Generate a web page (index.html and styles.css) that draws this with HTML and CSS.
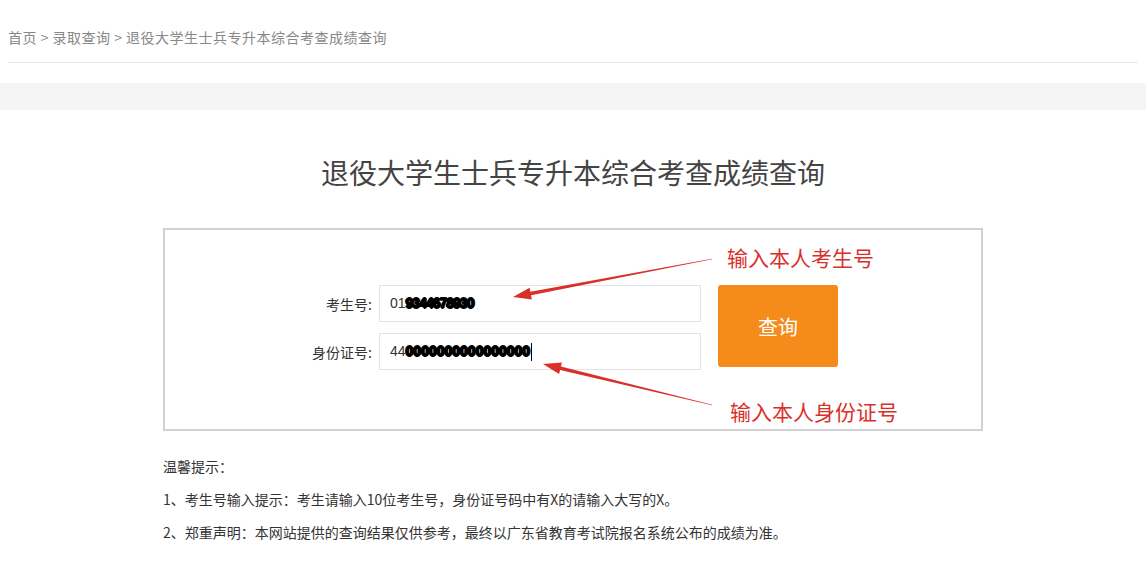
FILE: index.html
```html
<!DOCTYPE html>
<html lang="zh-CN">
<head>
    <meta charset="UTF-8">
    <title>退役大学生士兵专升本综合考查成绩查询</title>
    <link rel="stylesheet" href="styles.css">
</head>
<body>
    <div class="crumbs">
        <a href="#">首页</a> &gt; <a href="#">录取查询</a> &gt; <span>退役大学生士兵专升本综合考查成绩查询</span>
    </div>
    <div class="band"></div>

    <h1 class="title">退役大学生士兵专升本综合考查成绩查询</h1>

    <div class="query-box">
        <form class="query-form" onsubmit="return false">
            <div class="fields">
                <div class="row">
                    <label>考生号:</label>
                    <div class="input">01<span class="blot">9344678930</span></div>
                </div>
                <div class="row">
                    <label>身份证号:</label>
                    <div class="input">44<span class="blot blot-long">0000000000000000</span><span class="caret"></span></div>
                </div>
            </div>
            <button class="btn">查询</button>
        </form>

        <!-- 截图上的标注 -->
        <svg class="marks" viewBox="163 228 820 203" width="820" height="203">
            <polygon fill="#d9302a" points="712.06,259.29 531.04,295.37 531.83,299.49 513,297 529.57,287.71 530.36,291.83 711.94,258.71"/>
            <polygon fill="#d9302a" points="711.93,405.29 560.07,369.99 559.08,374.07 543,364 561.9,362.41 560.91,366.49 712.07,404.71"/>
        </svg>
        <div class="note note-1">输入本人考生号</div>
        <div class="note note-2">输入本人身份证号</div>
    </div>

    <div class="tips">
        <p>温馨提示：</p>
        <p>1、考生号输入提示：考生请输入10位考生号，身份证号码中有X的请输入大写的X。</p>
        <p>2、郑重声明：本网站提供的查询结果仅供参考，最终以广东省教育考试院报名系统公布的成绩为准。</p>
    </div>
</body>
</html>
```

FILE: styles.css
```css
body {
    margin: 0;
    font-family: "Noto Sans CJK SC", "Liberation Sans", sans-serif;
    font-size: 14px;
    color: #333;
    background: #fff;
}
.crumbs {
    margin: 0 8px;
    padding: 28px 0 16px;
    line-height: 18px;
    letter-spacing: 0.5px;
    color: #888;
    border-bottom: 1px solid #e6e6e6;
}
.crumbs a {
    color: #888;
    text-decoration: none;
}
.band {
    margin-top: 20px;
    height: 27px;
    background: #f5f5f5;
}
.title {
    margin: 42px 0 36px;
    font-size: 28px;
    font-weight: normal;
    line-height: 40px;
    text-align: center;
    color: #444;
}
.query-box {
    position: relative;
    width: 816px;
    height: 199px;
    margin: 0 auto;
    border: 2px solid #d2d2d2;
}
.query-form {
    display: flex;
    padding-top: 55px;
}
.fields {
    display: flex;
    flex-direction: column;
    gap: 11px;
}
.row {
    display: flex;
    align-items: center;
}
.row label {
    width: 207px;
    text-align: right;
    margin-right: 7px;
}
.input {
    position: relative;
    box-sizing: border-box;
    width: 322px;
    height: 37px;
    padding-left: 10px;
    border: 1px solid #e3e3e3;
    font-family: "Liberation Sans", sans-serif;
    font-size: 14px;
    line-height: 35px;
    color: #333;
}
.blot {
    color: #000;
    font-weight: bold;
    letter-spacing: -1px;
    text-shadow: 1px 0 #000, -1px 0 #000, 0 1px #000, 0 -1px #000;
}
.blot-long {
    letter-spacing: 0;
}
.caret {
    display: inline-block;
    width: 1px;
    height: 18px;
    background: #000;
    vertical-align: middle;
    margin-left: 1px;
}
.btn {
    margin-left: 17px;
    width: 120px;
    height: 82px;
    border: 0;
    border-radius: 3px;
    background: #f48b1b;
    color: #fff;
    font-family: "Noto Sans CJK SC", sans-serif;
    font-size: 20px;
    cursor: pointer;
}
.marks {
    position: absolute;
    left: -2px;
    top: -2px;
    pointer-events: none;
}
.note {
    position: absolute;
    font-size: 21px;
    line-height: 28px;
    color: #d9302a;
}
.note-1 {
    left: 562px;
    top: 13px;
}
.note-2 {
    left: 565px;
    top: 167px;
}
.tips {
    width: 820px;
    margin: 19px auto 0;
}
.tips p {
    margin: 0;
    line-height: 33px;
}
```
